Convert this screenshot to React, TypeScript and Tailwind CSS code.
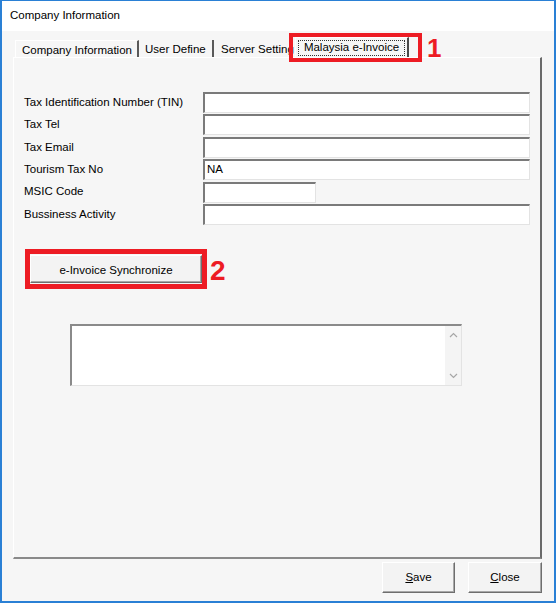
import React from "react";

const font = { fontFamily: '"Liberation Sans", Arial, sans-serif' };

interface FieldProps {
  label: string;
  value?: string;
  short?: boolean;
}

const Field: React.FC<FieldProps> = ({ label, value, short }) => (
  <div className="flex h-[21px] items-center">
    <span className="w-[179px] shrink-0 text-[11.5px] text-black">{label}</span>
    <div
      className={`h-[21px] ${short ? "w-[113px]" : "w-[327px]"} border-t-2 border-l-2 border-b border-r border-t-[#7a7a7a] border-l-[#7a7a7a] border-b-[#e3e3e3] border-r-[#e3e3e3] bg-white px-[2px] text-[11.5px] leading-[17px] text-black`}
    >
      {value}
    </div>
  </div>
);

const RaisedButton: React.FC<{ children: React.ReactNode; className?: string }> = ({
  children,
  className,
}) => (
  <button
    className={`flex items-center justify-center border border-t-white border-l-white border-b-[#6e6e6e] border-r-[#6e6e6e] bg-[#f3f3f3] text-[11.5px] text-black shadow-[inset_-1px_-1px_0_#a8a8a8] ${className ?? ""}`}
  >
    {children}
  </button>
);

const App: React.FC = () => {
  return (
    <div
      className="flex h-[603px] w-[556px] flex-col border-2 border-t border-[#2a80d5] bg-[#f6f6f6]"
      style={font}
    >
      {/* Title bar */}
      <div className="flex h-[30px] items-center bg-white pl-[8px] text-[11.5px] text-black">
        Company Information
      </div>

      <div className="flex flex-1 flex-col pl-[11px] pr-[12px] pt-[6px]">
        {/* Tabs */}
        <div className="relative flex h-[20px] items-end pl-[2px]">
          <div className="flex h-[17px] w-[124px] items-center border-t border-l border-t-white border-l-white border-r-2 border-r-[#5a5a5a] pl-[6px] pt-[3px] text-[11.5px]">
            Company Information
          </div>
          <div className="flex h-[17px] w-[75px] items-center border-r-2 border-r-[#5a5a5a] pl-[6px] pt-[3px] text-[11.5px]">
            User Define
          </div>
          <div className="flex h-[17px] w-[81px] items-center overflow-hidden whitespace-nowrap pl-[7px] pt-[3px] text-[11.5px]">
            Server Setting
          </div>
          <div className="flex h-[20px] w-[114px] items-center border-t border-l border-t-white border-l-white border-r-2 border-r-[#4a4a4a] bg-[#f6f6f6] px-[2px] pt-[1px]">
            <div className="flex h-[16px] w-full items-center justify-center border border-dotted border-[#333] text-[11.5px]">
              Malaysia e-Invoice
            </div>
          </div>
          {/* Annotation 1 */}
          <div className="absolute left-[276px] top-[-4px] h-[29px] w-[133px] border-[4px] border-[#ed1c24]" />
          <span className="absolute left-[414px] top-[-8px] text-[26px] font-bold text-[#ed1c24]">1</span>
        </div>

        {/* Tab panel */}
        <div className="flex h-[502px] flex-col border-t border-l border-t-white border-l-white border-r-2 border-b-2 border-r-[#6a6a6a] border-b-[#8a8a8a] pl-[10px] pt-[34px]">
          <div className="flex flex-col gap-[1.4px]">
            <Field label="Tax Identification Number (TIN)" value="" />
            <Field label="Tax Tel" />
            <Field label="Tax Email" />
            <Field label="Tourism Tax No" value="NA" />
            <Field label="MSIC Code" short />
            <Field label="Bussiness Activity" />
          </div>

          <div className="mt-[24px] flex items-center">
            <div className="ml-[1px] border-[5px] border-[#ed1c24] py-[1px]">
              <RaisedButton className="h-[28px] w-[172px] pt-[3px]">e-Invoice Synchronize</RaisedButton>
            </div>
            <span className="ml-[3px] mt-[5px] text-[28px] font-bold leading-none text-[#ed1c24]">2</span>
          </div>

          <div className="ml-[46px] mt-[35px] flex h-[62px] w-[392px] border-t-2 border-l-2 border-b border-r border-t-[#8a8a8a] border-l-[#8a8a8a] border-b-[#e3e3e3] border-r-[#e3e3e3] bg-white">
            <div className="flex-1" />
            <div className="flex w-[16px] flex-col items-center justify-between bg-[#f4f4f4] py-[6px]">
              <svg width="9" height="6" viewBox="0 0 9 6">
                <path d="M1 5 L4.5 1.5 L8 5" fill="none" stroke="#a6a6a6" strokeWidth="1.2" />
              </svg>
              <svg width="9" height="6" viewBox="0 0 9 6">
                <path d="M1 1 L4.5 4.5 L8 1" fill="none" stroke="#a6a6a6" strokeWidth="1.2" />
              </svg>
            </div>
          </div>
        </div>

        {/* Bottom buttons */}
        <div className="mt-[3px] flex justify-end gap-[13px]">
          <RaisedButton className="h-[31px] w-[73px]">
            <span>
              <span className="underline">S</span>ave
            </span>
          </RaisedButton>
          <RaisedButton className="h-[31px] w-[74px]">
            <span>
              <span className="underline">C</span>lose
            </span>
          </RaisedButton>
        </div>
      </div>
    </div>
  );
};

export default App;
